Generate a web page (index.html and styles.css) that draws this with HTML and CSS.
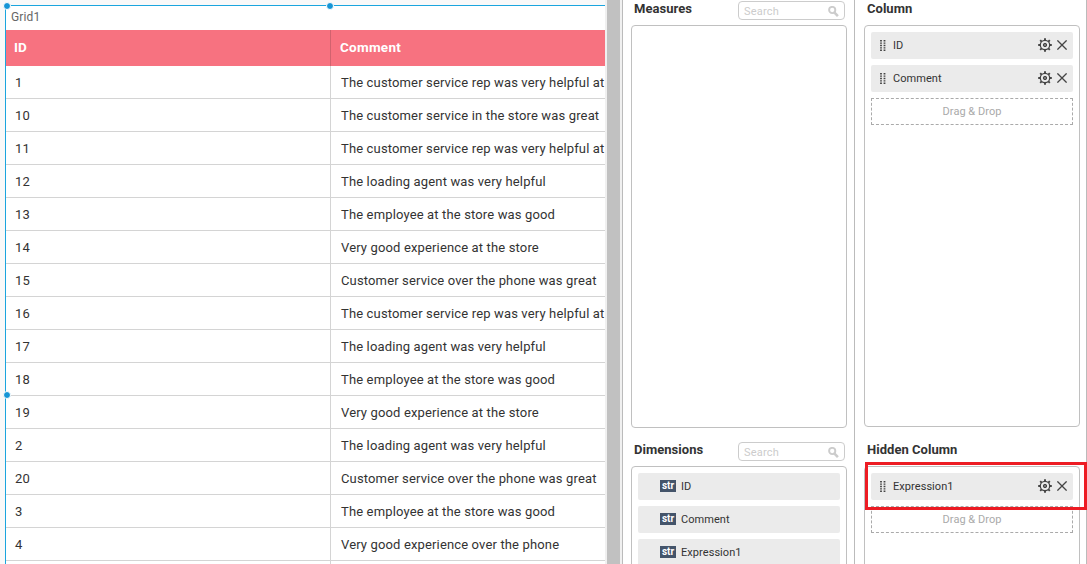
FILE: index.html
```
<!DOCTYPE html>
<html lang="en">
<head>
<meta charset="utf-8">
<title>Grid designer</title>
<link rel="stylesheet" href="styles.css">
</head>
<body>
<svg class="defs" aria-hidden="true">
  <symbol id="gear" viewBox="0 0 14 14">
    <circle cx="7" cy="7" r="4.7" fill="none" stroke="#444" stroke-width="1.3"/>
    <circle cx="7" cy="7" r="1.7" fill="#777" stroke="#444" stroke-width="1"/>
    <path d="M7 .2v2M7 11.8v2M.2 7h2M11.8 7h2M2.2 2.2l1.4 1.4M10.4 10.4l1.4 1.4M2.2 11.8l1.4-1.4M10.4 3.6l1.4-1.4" stroke="#444" stroke-width="1.9"/>
  </symbol>
  <symbol id="close" viewBox="0 0 10 10"><path d="M.4.4l9.2 9.2M9.6.4L.4 9.6" stroke="#444" stroke-width="1.3"/></symbol>
  <symbol id="grip" viewBox="0 0 6 11">
    <path d="M1 0v11M4.5 0v11" stroke="#444" stroke-width="1.8" stroke-dasharray="1.4 1"/>
  </symbol>
  <symbol id="search" viewBox="0 0 11 11"><circle cx="4.2" cy="4" r="3.1" fill="none" stroke="#ccc" stroke-width="1.9"/><path d="M6.3 6.3l3.6 3.9" stroke="#ccc" stroke-width="2.5"/></symbol>
</svg>
<div class="app">
  <main class="canvas">
    <section class="widget">
      <div class="widget-title">Grid1</div>
      <div class="row head"><div class="cell">ID</div><div class="cell">Comment</div></div>
      <div class="row"><div class="cell">1</div><div class="cell">The customer service rep was very helpful at</div></div>
      <div class="row"><div class="cell">10</div><div class="cell">The customer service in the store was great</div></div>
      <div class="row"><div class="cell">11</div><div class="cell">The customer service rep was very helpful at</div></div>
      <div class="row"><div class="cell">12</div><div class="cell">The loading agent was very helpful</div></div>
      <div class="row"><div class="cell">13</div><div class="cell">The employee at the store was good</div></div>
      <div class="row"><div class="cell">14</div><div class="cell">Very good experience at the store</div></div>
      <div class="row"><div class="cell">15</div><div class="cell">Customer service over the phone was great</div></div>
      <div class="row"><div class="cell">16</div><div class="cell">The customer service rep was very helpful at</div></div>
      <div class="row"><div class="cell">17</div><div class="cell">The loading agent was very helpful</div></div>
      <div class="row"><div class="cell">18</div><div class="cell">The employee at the store was good</div></div>
      <div class="row"><div class="cell">19</div><div class="cell">Very good experience at the store</div></div>
      <div class="row"><div class="cell">2</div><div class="cell">The loading agent was very helpful</div></div>
      <div class="row"><div class="cell">20</div><div class="cell">Customer service over the phone was great</div></div>
      <div class="row"><div class="cell">3</div><div class="cell">The employee at the store was good</div></div>
      <div class="row"><div class="cell">4</div><div class="cell">Very good experience over the phone</div></div>
      <div class="row"><div class="cell"></div><div class="cell"></div></div>
      <i class="handle corner"></i><i class="handle top"></i><i class="handle left"></i>
    </section>
  </main>
  <div class="scrollbar"></div>
  <aside class="panel fields">
    <header class="panel-head"><h2>Measures</h2><div class="search"><span>Search</span><svg><use href="#search"/></svg></div></header>
    <div class="box measures"></div>
    <header class="panel-head second"><h2>Dimensions</h2><div class="search"><span>Search</span><svg><use href="#search"/></svg></div></header>
    <div class="box rest">
      <div class="item field"><b class="type">str</b><span>ID</span></div>
      <div class="item field"><b class="type">str</b><span>Comment</span></div>
      <div class="item field"><b class="type">str</b><span>Expression1</span></div>
    </div>
  </aside>
  <aside class="panel bindings">
    <header class="panel-head"><h2>Column</h2></header>
    <div class="box columns">
      <div class="item"><svg class="grip"><use href="#grip"/></svg><span>ID</span><svg class="gear"><use href="#gear"/></svg><svg class="close"><use href="#close"/></svg></div>
      <div class="item"><svg class="grip"><use href="#grip"/></svg><span>Comment</span><svg class="gear"><use href="#gear"/></svg><svg class="close"><use href="#close"/></svg></div>
      <div class="drop">Drag &amp; Drop</div>
    </div>
    <header class="panel-head second"><h2>Hidden Column</h2></header>
    <div class="box rest">
      <div class="item"><svg class="grip"><use href="#grip"/></svg><span>Expression1</span><svg class="gear"><use href="#gear"/></svg><svg class="close"><use href="#close"/></svg></div>
      <div class="drop">Drag &amp; Drop</div>
      <div class="highlight"></div>
    </div>
  </aside>
</div>
</body>
</html>
```
FILE: styles.css
```
* { box-sizing: border-box; }
body { margin: 0; overflow: hidden; font-family: Roboto, "Liberation Sans", sans-serif; color: #333; background: #fff; }
.defs { position: absolute; width: 0; height: 0; }
.app { display: flex; width: 1087px; height: 564px; overflow: hidden; }

.canvas { width: 605px; padding: 5px 0 0 5px; background: #f9f9f9; flex: none; }
.widget { position: relative; width: 600px; height: 559px; border-top: 1px solid #1ba5de; border-left: 1px solid #1ba5de; background: #fff; }
.widget-title { height: 24px; padding-left: 5px; font-size: 12px; line-height: 22px; letter-spacing: .15px; color: #666; }
.row { display: grid; grid-template-columns: 325px 274px; height: 33px; font-size: 13px; line-height: 34px; letter-spacing: .145px; }
.cell { padding-left: 9px; border-bottom: 1px solid #d4d4d4; white-space: nowrap; overflow: hidden; }
.cell:first-child { border-right: 1px solid #d4d4d4; }
.cell + .cell { padding-left: 10px; }
.row.head { height: 36px; background: #f77280; color: #fff; font-size: 13.5px; font-weight: 700; line-height: 35px; letter-spacing: .25px; }
.head .cell { padding-left: 8px; border-bottom: 0; }
.head .cell:first-child { letter-spacing: 0; }
.head .cell + .cell { padding-left: 9px; }
.head .cell:first-child { border-right-color: #d1626e; }
.handle { position: absolute; width: 8px; height: 8px; border: 1px solid #fff; border-radius: 50%; background: #1595d6; }
.corner { left: -3.5px; top: -4.5px; }
.top { left: 320px; top: -4.5px; }
.left { left: -3.5px; top: 384.5px; }

.scrollbar { width: 17px; flex: none; background: #c1c1c1; border: solid #f0f0f0; border-width: 0 2px; }

.panel { display: flex; flex-direction: column; height: 564px; flex: none; }
.fields { width: 233px; padding: 0 7px 0 8px; border: solid #bbb; border-width: 0 1px; }
.bindings { width: 232px; padding: 0 6px 0 9px; border-right: 1px solid #bbb; }
.panel-head { display: flex; justify-content: space-between; align-items: flex-start; height: 25px; padding: 1px 2px 0 3px; flex: none; }
.panel-head.second { height: 38px; padding-top: 14px; }
.bindings .second { height: 39px; padding-top: 15px; }
h2 { margin: 0; font-size: 13px; line-height: 16px; font-weight: 700; letter-spacing: .03px; }
.search { display: flex; justify-content: space-between; align-items: center; width: 107px; height: 19px; padding: 0 5px; border: 1px solid #ccc; border-radius: 4px; font-size: 11px; line-height: 19px; letter-spacing: .2px; color: #ccc; }
.search span { padding-top: 1px; }
.search svg { width: 11px; height: 11px; margin-top: 1px; }
.box { width: 216px; padding: 6px; border: 1px solid #c0c0c0; border-radius: 4px; display: flex; flex-direction: column; gap: 6px; }
.measures { height: 403px; flex: none; }
.columns { height: 402px; flex: none; }
.rest { height: 110px; flex: none; position: relative; }
.item { display: flex; align-items: center; height: 27px; flex: none; padding: 0 6px 1px 9px; border-radius: 2px; background: #ebebeb; font-size: 11px; line-height: 24px; letter-spacing: .06px; }
.item span { padding-top: 2px; }
.grip { width: 6px; height: 11px; margin-right: 7px; }
.gear { width: 14px; height: 14px; margin-left: auto; margin-right: 5px; }
.close { width: 10px; height: 10px; }
.field { padding-left: 22px; }
.type { width: 16px; height: 12px; margin-right: 5px; background: #44546a; color: #fff; font: 700 10px/11px Roboto, sans-serif; text-align: center; letter-spacing: 0; }
.drop { height: 27px; flex: none; border: 1px dashed #aaa; font-size: 11px; line-height: 25px; text-align: center; color: #aaa; letter-spacing: .03px; }
.highlight { position: absolute; left: 0; top: -5px; width: 222px; height: 48px; border: 3px solid #ed1c24; }
```
